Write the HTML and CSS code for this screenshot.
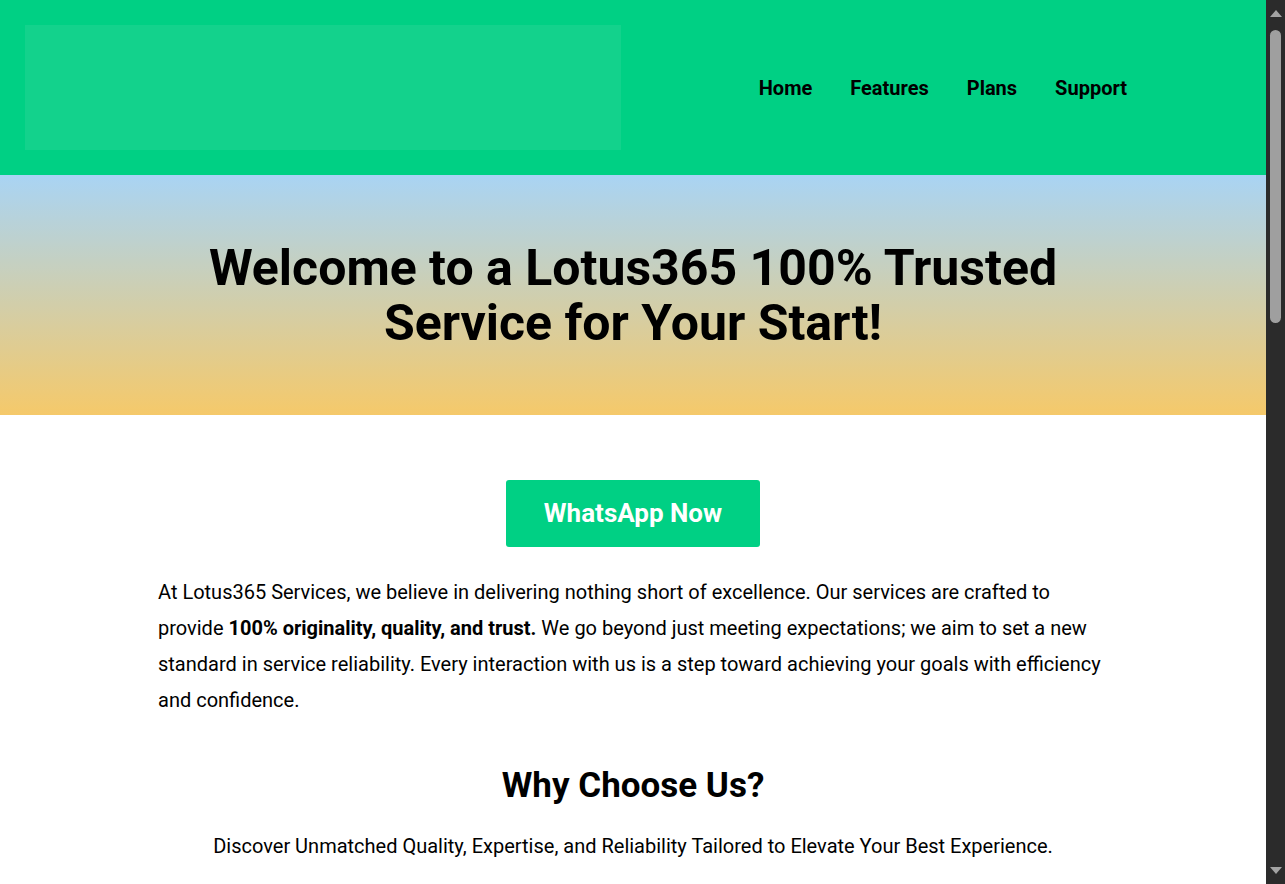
FILE: index.html
```html
<!DOCTYPE html>
<html lang="en">
<head>
<meta charset="utf-8">
<title>Lotus365 Services</title>
<link rel="stylesheet" href="styles.css">
</head>
<body>
<div class="page">
<header class="site-header">
  <div class="logo-box"></div>
  <nav class="main-nav">
    <a href="#" class="nav-link">Home</a>
    <a href="#" class="nav-link">Features</a>
    <a href="#" class="nav-link">Plans</a>
    <a href="#" class="nav-link">Support</a>
  </nav>
</header>
<section class="hero">
  <h1 class="hero-title">Welcome to a Lotus365 100% Trusted Service for Your Start!</h1>
</section>
<main class="content">
  <div class="cta-wrap">
    <a href="#" class="cta-btn">WhatsApp Now</a>
  </div>
  <p class="intro">At Lotus365 Services, we believe in delivering nothing short of excellence. Our services are crafted to provide <strong>100% originality, quality, and trust.</strong> We go beyond just meeting expectations; we aim to set a new standard in service reliability. Every interaction with us is a step toward achieving your goals with efficiency and confidence.</p>
  <h2 class="section-title">Why Choose Us?</h2>
  <p class="section-sub">Discover Unmatched Quality, Expertise, and Reliability Tailored to Elevate Your Best Experience.</p>
  <div class="features">
    <div class="feature"><h3>Trusted Platform</h3><p>Secure and reliable service with round-the-clock assistance for every user.</p></div>
    <div class="feature"><h3>Instant Support</h3><p>Reach our team quickly on WhatsApp and get answers whenever you need them.</p></div>
    <div class="feature"><h3>Fast Setup</h3><p>Get started in minutes with a simple and smooth onboarding process.</p></div>
    <div class="feature"><h3>Flexible Plans</h3><p>Choose the plan that suits your needs and upgrade whenever you like.</p></div>
  </div>
  <h2 class="section-title">Our Plans</h2>
  <p class="section-sub">Simple options designed to fit every level of experience.</p>
  <div class="features">
    <div class="feature"><h3>Basic</h3><p>Everything you need to begin with confidence.</p></div>
    <div class="feature"><h3>Standard</h3><p>More features and priority support for regular users.</p></div>
    <div class="feature"><h3>Premium</h3><p>Full access with dedicated assistance at every step.</p></div>
    <div class="feature"><h3>Custom</h3><p>Tailored solutions built around your specific goals.</p></div>
  </div>
  <h2 class="section-title">Support</h2>
  <p class="section-sub">Our team is available 24/7 to help you with any questions.</p>
</main>
<footer class="site-footer">© 2024 Lotus365 Services. All rights reserved.</footer>
</div>
<div class="fake-scrollbar" aria-hidden="true">
  <span class="sb-arrow sb-up"></span>
  <span class="sb-thumb"></span>
  <span class="sb-arrow sb-down"></span>
</div>
</body>
</html>
```
FILE: styles.css
```css
html {
  background: #ffffff;
}
body {
  margin: 0;
  background: #ffffff;
  color: #000000;
  font-family: Roboto, "Liberation Sans", Arial, sans-serif;
}
.page {
  margin-right: 19px;
}
.site-header {
  background: #00d084;
  display: flex;
  align-items: center;
  padding: 25px;
}
.logo-box {
  width: 596px;
  height: 125px;
  background: #13d28c;
}
.main-nav {
  display: flex;
  margin-left: auto;
  margin-right: 95px;
}
.nav-link {
  color: #000000;
  text-decoration: none;
  font-weight: 700;
  font-size: 20px;
  padding: 0 19px;
}
.hero {
  height: 240px;
  box-sizing: border-box;
  padding-top: 2px;
  background: linear-gradient(to bottom, #a9d4f4, #f5c96a);
  display: flex;
  align-items: center;
  justify-content: center;
}
.hero-title {
  margin: 0;
  max-width: 900px;
  text-align: center;
  font-size: 50px;
  line-height: 55px;
  font-weight: 700;
}
.content {
  max-width: 950px;
  margin: 0 auto;
  padding: 65px 0 40px;
}
.cta-wrap {
  display: flex;
  justify-content: center;
}
.cta-btn {
  display: block;
  background: #00d084;
  color: #ffffff;
  text-decoration: none;
  font-weight: 700;
  font-size: 26px;
  line-height: 67px;
  padding: 0 38px;
  border-radius: 3px;
}
.intro {
  margin: 27px 0 0;
  font-size: 20px;
  line-height: 36px;
}
.section-title {
  margin: 47px 0 0;
  text-align: center;
  font-size: 35px;
  line-height: 41px;
}
.section-sub {
  margin: 22px 0 0;
  text-align: center;
  font-size: 20px;
  line-height: 36px;
}
.features {
  display: grid;
  grid-template-columns: repeat(2, 1fr);
  gap: 30px;
  margin-top: 40px;
}
.feature {
  background: #f4f4f4;
  padding: 30px;
  border-radius: 6px;
  min-height: 180px;
}
.feature h3 {
  margin: 0 0 12px;
  font-size: 24px;
}
.feature p {
  margin: 0;
  font-size: 18px;
  line-height: 30px;
}
.site-footer {
  background: #00d084;
  text-align: center;
  padding: 30px;
  font-size: 16px;
}
.fake-scrollbar {
  position: fixed;
  top: 0;
  right: 0;
  width: 19px;
  height: 100vh;
  background: #2b2b2b;
}
.sb-thumb {
  position: absolute;
  left: 4px;
  top: 30px;
  width: 11px;
  height: 293px;
  border-radius: 6px;
  background: #9f9f9f;
}
.sb-arrow {
  position: absolute;
  left: 4px;
  width: 0;
  height: 0;
  border-left: 6px solid transparent;
  border-right: 6px solid transparent;
}
.sb-up {
  top: 10px;
  border-bottom: 7px solid #a3a3a3;
}
.sb-down {
  bottom: 10px;
  border-top: 7px solid #a3a3a3;
}
```
